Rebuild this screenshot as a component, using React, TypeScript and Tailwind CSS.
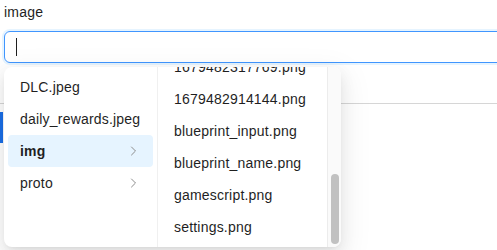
import React from "react";

const col1 = [
  { name: "DLC.jpeg", dir: false },
  { name: "daily_rewards.jpeg", dir: false },
  { name: "img", dir: true, active: true },
  { name: "proto", dir: true },
];

const col2 = [
  "1679482317769.png",
  "1679482914144.png",
  "blueprint_input.png",
  "blueprint_name.png",
  "gamescript.png",
  "settings.png",
];

function Chevron() {
  return (
    <svg width="8" height="10" viewBox="0 0 8 10" fill="none" className="shrink-0">
      <path d="M1.5 1 L5.5 5 L1.5 9" stroke="#8c8c8c" strokeWidth="1" strokeLinecap="round" strokeLinejoin="round" />
    </svg>
  );
}

export default function App() {
  return (
    <div
      className="relative w-[497px] h-[250px] overflow-hidden bg-white text-[14px] text-[#1f1f1f] tracking-[0.2px]"
      style={{ fontFamily: '"Liberation Sans", Arial, sans-serif' }}
    >
      <div className="pl-[4px] pt-[1px]">
        <div className="h-[22px] leading-[22px] mb-[8px]">image</div>
        <div className="h-[32px] w-[530px] rounded-[6px] border border-[#4096ff] shadow-[0_0_0_2px_rgba(5,145,255,0.1)] flex items-center pl-[11px]">
          <div className="w-px h-[18px] bg-[#1f1f1f]" />
        </div>
      </div>
      <div className="mt-[40px] border-t border-[#d6d6d6]">
        <div className="mt-[8px] w-[3px] h-[31px] bg-[#1a6fe8]" />
      </div>

      <div className="absolute left-[4px] top-[67px] w-[337px] h-[180px] rounded-[8px] bg-white shadow-[0_6px_16px_0_rgba(0,0,0,0.08),0_3px_6px_-4px_rgba(0,0,0,0.12),0_9px_28px_8px_rgba(0,0,0,0.05)] flex overflow-hidden">
        <div className="w-[154px] border-r border-[#f0f0f0] p-[4px]">
          {col1.map((it) => (
            <div
              key={it.name}
              className={
                "h-[32px] pl-[12px] pr-[15px] flex items-center justify-between rounded-[4px] " +
                (it.active ? "bg-[#e6f4ff] font-semibold" : "")
              }
            >
              <span>{it.name}</span>
              {it.dir && <Chevron />}
            </div>
          ))}
        </div>
        <div className="w-[169px] overflow-hidden">
          <div className="-mt-[16px] px-[4px]">
            {col2.map((n) => (
              <div key={n} className="h-[32px] px-[12px] flex items-center rounded-[4px]">
                {n}
              </div>
            ))}
          </div>
        </div>
        <div className="relative w-[14px] border-l border-[#ececec] bg-[#fafafa]">
          <div className="absolute left-[3px] top-[107px] w-[8px] h-[70px] rounded-[4px] bg-[#c1c1c1]" />
        </div>
      </div>
    </div>
  );
}
